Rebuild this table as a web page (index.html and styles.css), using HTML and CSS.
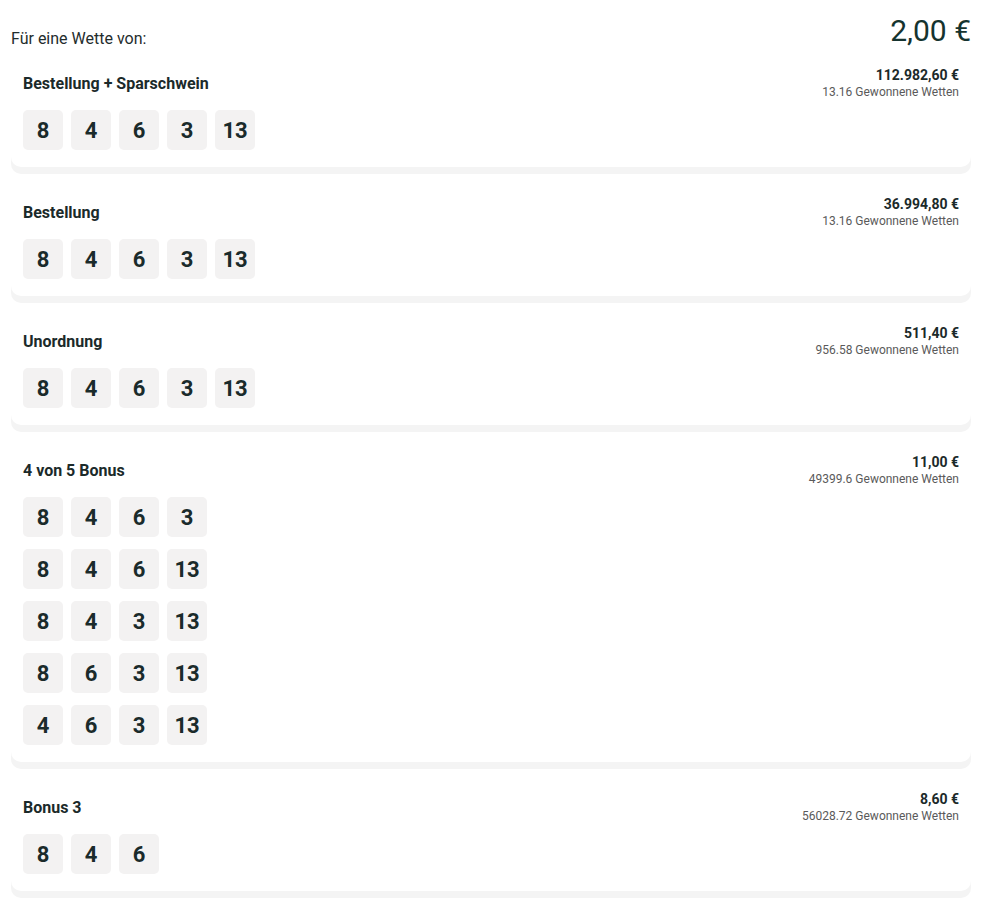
FILE: index.html
```html
<!DOCTYPE html>
<html lang="de">
<head>
<meta charset="utf-8">
<title>Gewinne</title>
<link rel="stylesheet" href="styles.css">
</head>
<body>
<div class="page">
  <div class="header">
    <span class="label">Für eine Wette von:</span>
    <span class="stake">2,00 €</span>
  </div>

  <div class="card">
    <div class="card-head">
      <div class="title">Bestellung + Sparschwein</div>
      <div class="payout"><div class="amount">112.982,60 €</div><div class="count">13.16 Gewonnene Wetten</div></div>
    </div>
    <div class="rows">
      <div class="row"><span class="num">8</span><span class="num">4</span><span class="num">6</span><span class="num">3</span><span class="num">13</span></div>
    </div>
  </div>

  <div class="card">
    <div class="card-head">
      <div class="title">Bestellung</div>
      <div class="payout"><div class="amount">36.994,80 €</div><div class="count">13.16 Gewonnene Wetten</div></div>
    </div>
    <div class="rows">
      <div class="row"><span class="num">8</span><span class="num">4</span><span class="num">6</span><span class="num">3</span><span class="num">13</span></div>
    </div>
  </div>

  <div class="card">
    <div class="card-head">
      <div class="title">Unordnung</div>
      <div class="payout"><div class="amount">511,40 €</div><div class="count">956.58 Gewonnene Wetten</div></div>
    </div>
    <div class="rows">
      <div class="row"><span class="num">8</span><span class="num">4</span><span class="num">6</span><span class="num">3</span><span class="num">13</span></div>
    </div>
  </div>

  <div class="card">
    <div class="card-head">
      <div class="title">4 von 5 Bonus</div>
      <div class="payout"><div class="amount">11,00 €</div><div class="count">49399.6 Gewonnene Wetten</div></div>
    </div>
    <div class="rows">
      <div class="row"><span class="num">8</span><span class="num">4</span><span class="num">6</span><span class="num">3</span></div>
      <div class="row"><span class="num">8</span><span class="num">4</span><span class="num">6</span><span class="num">13</span></div>
      <div class="row"><span class="num">8</span><span class="num">4</span><span class="num">3</span><span class="num">13</span></div>
      <div class="row"><span class="num">8</span><span class="num">6</span><span class="num">3</span><span class="num">13</span></div>
      <div class="row"><span class="num">4</span><span class="num">6</span><span class="num">3</span><span class="num">13</span></div>
    </div>
  </div>

  <div class="card">
    <div class="card-head">
      <div class="title">Bonus 3</div>
      <div class="payout"><div class="amount">8,60 €</div><div class="count">56028.72 Gewonnene Wetten</div></div>
    </div>
    <div class="rows">
      <div class="row"><span class="num">8</span><span class="num">4</span><span class="num">6</span></div>
    </div>
  </div>
</div>
</body>
</html>
```

FILE: styles.css
```css
html, body {
  margin: 0;
  padding: 0;
  background: #ffffff;
}
body {
  font-family: Roboto, "Liberation Sans", Arial, sans-serif;
  color: #1a2b2b;
}
.page {
  padding: 0 10px 0 11px;
  display: flex;
  flex-direction: column;
}
.header {
  display: flex;
  justify-content: space-between;
  align-items: flex-start;
  height: 57px;
}
.label {
  font-size: 16px;
  color: #1f2d2d;
  line-height: 20px;
  margin-top: 29px;
}
.stake {
  font-size: 30px;
  color: #15332f;
  line-height: 36px;
  margin-top: 13px;
}
.card {
  background: #ffffff;
  border-radius: 10px;
  box-shadow: 0 7px 0 #f4f4f4;
  padding: 10px 12px 17px 12px;
  margin-bottom: 19px;
}
.card-head {
  display: flex;
  justify-content: space-between;
  align-items: center;
  height: 33px;
  margin-bottom: 10px;
}
.title {
  font-size: 16px;
  font-weight: 700;
  line-height: 20px;
  color: #1b2a2a;
}
.payout {
  text-align: right;
}
.amount {
  font-size: 14px;
  font-weight: 700;
  line-height: 17px;
  color: #1b2a2a;
}
.count {
  font-size: 12px;
  line-height: 16px;
  color: #5a5a5a;
}
.rows {
  display: flex;
  flex-direction: column;
  gap: 12px;
}
.row {
  display: flex;
  gap: 8px;
}
.num {
  width: 40px;
  height: 40px;
  border-radius: 5px;
  background: #f3f2f2;
  display: flex;
  align-items: center;
  justify-content: center;
  font-size: 22px;
  font-weight: 700;
  color: #1a2b2b;
}
```
